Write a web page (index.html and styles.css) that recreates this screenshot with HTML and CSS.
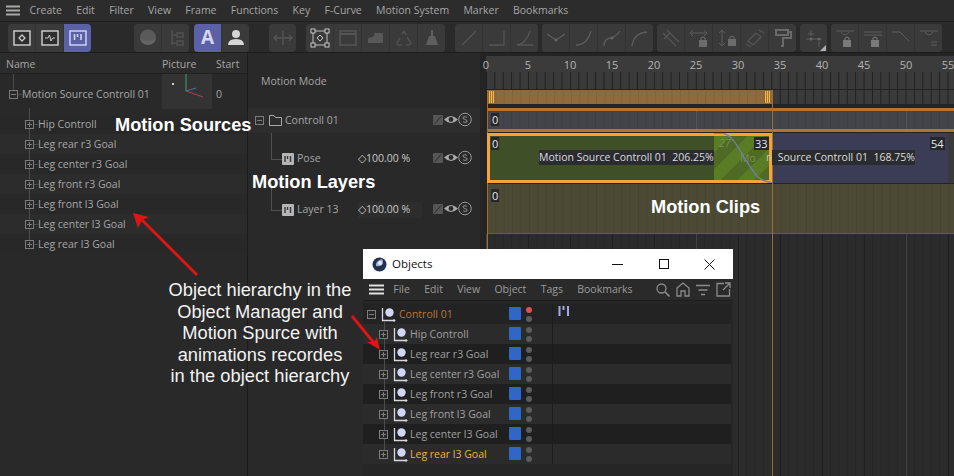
FILE: index.html
```html
<!DOCTYPE html>
<html lang="en">
<head>
<meta charset="utf-8">
<title>Motion System</title>
<link rel="stylesheet" href="styles.css">
</head>
<body>
<svg class="defs" width="0" height="0">
  <symbol id="minus" viewBox="0 0 9 9"><rect x=".5" y=".5" width="8" height="8" fill="none" stroke="currentColor"/><path d="M2 4.5H7" stroke="currentColor"/></symbol>
  <symbol id="plus" viewBox="0 0 9 9"><rect x=".5" y=".5" width="8" height="8" fill="none" stroke="currentColor"/><path d="M2 4.5H7M4.5 2V7" stroke="currentColor"/></symbol>
  <symbol id="clip" viewBox="0 0 12 12"><rect width="12" height="12" rx="1" fill="#b5b5b5"/><path d="M3 3V9M5.5 3V6M8.5 3V9" stroke="#3a3a3a" stroke-width="1.4"/></symbol>
  <symbol id="null" viewBox="0 0 15 15"><path d="M1.5 1V13.5H14" fill="none" stroke="#d8d8e0" stroke-width="1.3"/><path d="M12.500 12l1.500 1.500-1.500 1.500" fill="none" stroke="#d8d8e0"/><circle cx="8.500" cy="5.500" r="4.200" fill="#d2d6f6"/></symbol>
  <symbol id="states" viewBox="0 0 40 15"><rect x="1" y="3" width="10" height="10" rx="1" fill="#555"/><path d="M3 11.500l6-7" stroke="#2a2a2a"/><path d="M12 7.500q7-7 14 0q-7 7-14 0z" fill="#aaa"/><circle cx="19" cy="7.500" r="2.400" fill="#2a2a2a"/><circle cx="33" cy="7.500" r="6.300" fill="none" stroke="#999"/><path d="M35 5.300q-2-1.300-4 0q-.8 1.500 2 2.200q3 .8 2 2.300q-2 1.300-4 0" fill="none" stroke="#999" stroke-width=".9"/></symbol>
</svg>

<nav class="menubar">
  <svg class="burger" width="14" height="11" viewBox="0 0 14 11"><path d="M0 1.500H14M0 5.500H14M0 9.500H14" stroke="#a8a8a8" stroke-width="1.800"/></svg>
  <span>Create</span><span>Edit</span><span>Filter</span><span>View</span><span>Frame</span><span>Functions</span><span>Key</span><span>F-Curve</span><span>Motion System</span><span>Marker</span><span>Bookmarks</span>
</nav>

<div class="toolbar">
  <div class="grip"></div>
  <div class="group">
    <button><svg viewBox="0 0 20 20"><rect x="2" y="3" width="16" height="14" fill="#2e2e2e" stroke="#c8c8c8" stroke-width="1.500"/><path d="M10 7l3 3-3 3-3-3z" fill="none" stroke="#c8c8c8" stroke-width="1.300"/></svg></button>
    <button><svg viewBox="0 0 20 20"><rect x="2" y="3" width="16" height="14" fill="#2e2e2e" stroke="#c8c8c8" stroke-width="1.500"/><path d="M5 10H8L9.500 7L11 13L12.500 10H15" fill="none" stroke="#c8c8c8"/></svg></button>
    <button class="on"><svg viewBox="0 0 20 20"><rect x="2" y="3" width="16" height="14" fill="none" stroke="#cfd2ee" stroke-width="1.500"/><path d="M6.500 6V12M9.500 6V9M13 6V12" stroke="#cfd2ee" stroke-width="1.600"/></svg></button>
  </div>
  <div class="group g-far">
    <button><svg viewBox="0 0 20 20"><ellipse cx="10" cy="9" rx="8" ry="7.500" fill="#5a5a5a"/><path d="M2 10q8 6 16 0q-1 7-8 7t-8-7z" fill="#646464"/></svg></button>
    <button><svg viewBox="0 0 20 20"><path d="M6 2V17M6 7H11M6 15H11M11 5H17V9H11ZM11 13H17V17H11Z" fill="none" stroke="#525252" stroke-width="1.500"/></svg></button>
  </div>
  <div class="group g-5">
    <button class="on"><span class="glyph">A</span></button>
    <button><svg viewBox="0 0 20 20"><circle cx="10" cy="6" r="4" fill="#d6d6d6"/><path d="M2 17q0-6 8-6t8 6z" fill="#d6d6d6"/></svg></button>
  </div>
  <div class="group g-20">
    <button><svg viewBox="0 0 20 20"><path d="M1 10H19M4 7l-3 3 3 3M16 7l3 3-3 3M10 3V17" fill="none" stroke="#555" stroke-width="1.300"/></svg></button>
  </div>
  <div class="group g-10">
    <button><svg viewBox="0 0 20 20"><rect x="3" y="3" width="14" height="14" fill="none" stroke="#bdbdbd"/><rect x="1" y="1" width="4" height="4" fill="#333" stroke="#c8c8c8"/><rect x="15" y="1" width="4" height="4" fill="#333" stroke="#c8c8c8"/><rect x="1" y="15" width="4" height="4" fill="#333" stroke="#c8c8c8"/><rect x="15" y="15" width="4" height="4" fill="#333" stroke="#c8c8c8"/><path d="M10 7l3 3-3 3-3-3z" fill="none" stroke="#c8c8c8"/></svg></button>
    <button><svg viewBox="0 0 20 20"><rect x="2" y="3" width="16" height="14" fill="none" stroke="#555" stroke-width="1.500"/><path d="M2 6H18" stroke="#555" stroke-width="2"/></svg></button>
    <button><svg viewBox="0 0 20 20"><path d="M2 15V11Q3 9 7 9L9 5H17V15Z" fill="#585858"/></svg></button>
    <button><svg viewBox="0 0 20 20"><path d="M10 3L12.500 7M13 9L17 15L15 17H12M8 17H4L3 15L6 10M8 6L10 3" fill="none" stroke="#505050" stroke-width="1.500"/></svg></button>
    <button><svg viewBox="0 0 20 20"><path d="M9 2H11V8H13L16 17H4L7 8H9Z" fill="#5e5e5e"/></svg></button>
  </div>
  <div class="group g-10">
    <button><svg viewBox="0 0 20 20"><path d="M3 17L17 3" stroke="#555" stroke-width="1.300"/></svg></button>
    <button><svg viewBox="0 0 20 20"><path d="M2 17H17V3" fill="none" stroke="#555" stroke-width="1.300"/></svg></button>
    <button><svg viewBox="0 0 20 20"><path d="M2 17Q11 16 15 3M2 17H18" fill="none" stroke="#555" stroke-width="1.300"/></svg></button>
  </div>
  <div class="group">
    <button><svg viewBox="0 0 20 20"><path d="M1 6L10 12L19 6" fill="none" stroke="#5c5c5c" stroke-width="1.300"/><circle cx="10" cy="12" r="1.500" fill="#666"/></svg></button>
    <button><svg viewBox="0 0 20 20"><path d="M2 17Q13 17 17 3" fill="none" stroke="#5c5c5c" stroke-width="1.300"/></svg></button>
    <button><svg viewBox="0 0 20 20"><path d="M2 18Q2 11 8 10T18 3" fill="none" stroke="#5c5c5c" stroke-width="1.300"/><circle cx="10" cy="10" r="1.500" fill="#666"/></svg></button>
    <button><svg viewBox="0 0 20 20"><path d="M2 18Q4 5 17 4" fill="none" stroke="#5c5c5c" stroke-width="1.300"/></svg></button>
  </div>
  <div class="group">
    <button><svg viewBox="0 0 20 20"><path d="M2 5L15 18M6 2L18 14M3 11L9 5" fill="none" stroke="#555" stroke-width="1.300"/></svg></button>
    <button><svg viewBox="0 0 20 20"><path d="M1 5H18M1 5l3-3M1 5l3 3M18 5l-3-3M18 5l-3 3" fill="none" stroke="#5c5c5c"/><rect x="10" y="12" width="8" height="7" fill="#6c6c6c"/><path d="M12 12V10Q14 8 16 10V12" fill="none" stroke="#6c6c6c"/></svg></button>
    <button><svg viewBox="0 0 20 20"><path d="M5 2V18M5 2l-3 3M5 2l3 3M5 18l-3-3M5 18l3-3" fill="none" stroke="#5c5c5c"/><rect x="11" y="11" width="8" height="7" fill="#6c6c6c"/><path d="M13 11V9Q15 7 17 9V11" fill="none" stroke="#6c6c6c"/></svg></button>
    <button><svg viewBox="0 0 20 20"><path d="M3 13L11 5L16 9L8 17ZM1 16L6 19M14 2L19 5" fill="none" stroke="#555" stroke-width="1.300"/></svg></button>
    <button><svg viewBox="0 0 20 20"><path d="M3 2H15V7H3ZM15 4H18V10H10V18H8" fill="none" stroke="#6a6a6a" stroke-width="2"/></svg></button>
  </div>
  <div class="group corner">
    <button><svg viewBox="0 0 20 20"><path d="M2 11H18M7 2V8M4 6H10" stroke="#5c5c5c"/><circle cx="7" cy="11" r="1.500" fill="#666"/><circle cx="15" cy="11" r="1.500" fill="#666"/><path d="M15 14V19" stroke="#5c5c5c"/></svg></button>
  </div>
  <div class="group">
    <button><svg viewBox="0 0 20 20"><path d="M1 3H19M6 4Q10 10 14 4" fill="none" stroke="#5c5c5c"/><rect x="8" y="12" width="8" height="7" fill="#7a7a7a"/><path d="M10 12V10Q12 8 14 10V12" fill="none" stroke="#7a7a7a"/></svg></button>
    <button><svg viewBox="0 0 20 20"><path d="M1 4H19M1 7H19" fill="none" stroke="#5c5c5c"/><rect x="8" y="12" width="8" height="7" fill="#7a7a7a"/><path d="M10 12V10Q12 8 14 10V12" fill="none" stroke="#7a7a7a"/></svg></button>
    <button><svg viewBox="0 0 20 20"><path d="M1 4H9L18 13" fill="none" stroke="#5c5c5c"/></svg></button>
    <button><svg viewBox="0 0 20 20"><path d="M1 3H19M6 4Q10 10 14 4M12 14H18M12 17H18" fill="none" stroke="#5c5c5c"/></svg></button>
  </div>
</div>

<main class="workspace">
  <section class="sources">
    <header class="src-head"><span class="h-name">Name</span><span class="h-pic">Picture</span><span>Start</span></header>
    <div class="src-root">
      <svg class="ex"><use href="#minus"/></svg>
      <span class="root-name">Motion Source Controll 01</span>
      <div class="thumb"><svg width="50" height="35" viewBox="0 0 50 35"><rect x="10" y="9" width="2" height="2" fill="#ccc"/><path d="M24 0V17" stroke="#3fa070"/><path d="M24 17L34 14" stroke="#4a6fb0"/><path d="M24 17L41 23" stroke="#b04050"/></svg></div>
      <span class="root-start">0</span>
    </div>
    <ul class="src-list">
      <li><svg class="ex"><use href="#plus"/></svg>Hip Controll</li>
      <li><svg class="ex"><use href="#plus"/></svg>Leg rear r3 Goal</li>
      <li><svg class="ex"><use href="#plus"/></svg>Leg center r3 Goal</li>
      <li><svg class="ex"><use href="#plus"/></svg>Leg front r3 Goal</li>
      <li><svg class="ex"><use href="#plus"/></svg>Leg front l3 Goal</li>
      <li><svg class="ex"><use href="#plus"/></svg>Leg center l3 Goal</li>
      <li><svg class="ex"><use href="#plus"/></svg>Leg rear l3 Goal</li>
    </ul>
  </section>

  <section class="layers">
    <div class="mode">Motion Mode</div>
    <div class="layer-group"><svg class="ex"><use href="#minus"/></svg><svg class="folder" width="13" height="11" viewBox="0 0 13 11"><path d="M.500 10.500V.500H5L6.500 2.500H12.500V10.500Z" fill="none" stroke="#a8a8a8"/></svg><span class="layer-label">Controll 01</span><svg class="states" width="40" height="15"><use href="#states"/></svg></div>
    <div class="layer"><svg class="clip-ic" width="12" height="12"><use href="#clip"/></svg><span class="layer-name">Pose</span><span class="value">◇100.00 %</span><svg class="states" width="40" height="15"><use href="#states"/></svg></div>
    <div class="layer"><svg class="clip-ic" width="12" height="12"><use href="#clip"/></svg><span class="layer-name">Layer 13</span><span class="value boxed">◇100.00 %</span><svg class="states" width="40" height="15"><use href="#states"/></svg></div>
  </section>

  <section class="timeline">
    <div class="ruler"><span>0</span><span>5</span><span>10</span><span>15</span><span>20</span><span>25</span><span>30</span><span>35</span><span>40</span><span>45</span><span>50</span><span>55</span></div>
    <div class="keys"></div>
    <div class="range"><div class="range-bar"><i class="handle"></i><i class="handle"></i></div></div>
    <div class="group-track"><b class="num">0</b></div>
    <div class="clip-track">
      <div class="clip-green">
        <div class="blend"><span class="ghost g27">27</span><span class="ghost gmo">Mo</span>
          <svg width="58" height="50" viewBox="0 0 58 50"><path d="M0 0H8C22 2 28 26 44 44Q48 48 58 50" fill="none" stroke="#6f7fa8" stroke-width="1.400"/></svg>
        </div>
        <b class="num">0</b><b class="num num-33">33</b>
        <span class="clip-text">Motion Source Controll 01&nbsp; 206.25%</span>
      </div>
      <div class="clip-blue"><b class="num num-end">54</b><span class="blue-text"><span class="cut">n</span><span class="clip-text inline"> Source Controll 01&nbsp; 168.75%</span></span></div>
    </div>
    <div class="motion-track"><b class="num">0</b></div>
    <div class="lower"></div>
    <i class="mark mark-a"></i><i class="mark mark-b"></i>
  </section>
</main>

<div class="note n-sources">Motion Sources</div>
<div class="note n-layers">Motion Layers</div>
<div class="note n-clips">Motion Clips</div>
<div class="caption">Object hierarchy in the<br>Object Manager and<br>Motion Spurce with<br>animations recordes<br>in the object hierarchy</div>

<div class="window">
  <div class="titlebar">
    <svg class="c4d" width="15" height="15" viewBox="0 0 15 15"><circle cx="7.500" cy="7.500" r="7" fill="#23304f"/><path d="M4 9Q3 4 10 2Q12 5 10 8Q7 10 4 9Z" fill="#9fb2d6"/><circle cx="8" cy="6" r="2" fill="#e8eef8"/></svg>
    <span class="win-title">Objects</span>
    <div class="win-btns">
      <svg width="11" height="11" viewBox="0 0 11 11"><path d="M0 5.500H11" stroke="#111"/></svg>
      <svg width="10" height="10" viewBox="0 0 10 10"><rect x=".5" y=".5" width="9" height="9" fill="none" stroke="#111"/></svg>
      <svg width="11" height="11" viewBox="0 0 11 11"><path d="M.500 .500L10.500 10.500M10.500 .500L.500 10.500" stroke="#111"/></svg>
    </div>
  </div>
  <div class="win-menu">
    <svg class="burger" width="15" height="11" viewBox="0 0 15 11"><path d="M0 1.500H15M0 5.500H15M0 9.500H15" stroke="#e0e0e0" stroke-width="1.800"/></svg>
    <span>File</span><span>Edit</span><span>View</span><span>Object</span><span>Tags</span><span>Bookmarks</span>
    <div class="win-tools">
      <svg width="14" height="14" viewBox="0 0 14 14"><circle cx="5.500" cy="5.500" r="4.500" fill="none" stroke="#8c8c8c" stroke-width="1.300"/><path d="M9 9L13.500 13.500" stroke="#8c8c8c" stroke-width="1.600"/></svg>
      <svg width="14" height="15" viewBox="0 0 14 15"><path d="M1 14V6L7 1L13 6V14H9V9H5V14Z" fill="none" stroke="#8c8c8c" stroke-width="1.300"/></svg>
      <svg width="14" height="12" viewBox="0 0 14 12"><path d="M0 1.500H14M2.500 6H11.500M5 10.500H9" stroke="#8c8c8c" stroke-width="1.600"/></svg>
      <svg width="15" height="15" viewBox="0 0 15 15"><path d="M8 1.500H1V14H13.500V7M7 8L14 1M9 1H14V6" fill="none" stroke="#8c8c8c" stroke-width="1.300"/></svg>
    </div>
  </div>
  <div class="obj-tree">
    <div class="obj top"><div class="obj-left"><svg class="ex"><use href="#minus"/></svg><svg class="nl" width="15" height="15"><use href="#null"/></svg><span class="obj-name orange">Controll 01</span><i class="swatch"></i><i class="dots red"></i></div><div class="obj-right"><svg width="12" height="12" viewBox="0 0 12 12"><path d="M1.500 1V11M5.500 1V5M10 1V11" stroke="#a6a6e8" stroke-width="2"/></svg></div></div>
    <div class="obj"><div class="obj-left"><svg class="ex"><use href="#plus"/></svg><svg class="nl" width="15" height="15"><use href="#null"/></svg><span class="obj-name">Hip Controll</span><i class="swatch"></i><i class="dots"></i></div><div class="obj-right"></div></div>
    <div class="obj"><div class="obj-left"><svg class="ex"><use href="#plus"/></svg><svg class="nl" width="15" height="15"><use href="#null"/></svg><span class="obj-name">Leg rear r3 Goal</span><i class="swatch"></i><i class="dots"></i></div><div class="obj-right"></div></div>
    <div class="obj"><div class="obj-left"><svg class="ex"><use href="#plus"/></svg><svg class="nl" width="15" height="15"><use href="#null"/></svg><span class="obj-name">Leg center r3 Goal</span><i class="swatch"></i><i class="dots"></i></div><div class="obj-right"></div></div>
    <div class="obj"><div class="obj-left"><svg class="ex"><use href="#plus"/></svg><svg class="nl" width="15" height="15"><use href="#null"/></svg><span class="obj-name">Leg front r3 Goal</span><i class="swatch"></i><i class="dots"></i></div><div class="obj-right"></div></div>
    <div class="obj"><div class="obj-left"><svg class="ex"><use href="#plus"/></svg><svg class="nl" width="15" height="15"><use href="#null"/></svg><span class="obj-name">Leg front l3 Goal</span><i class="swatch"></i><i class="dots"></i></div><div class="obj-right"></div></div>
    <div class="obj"><div class="obj-left"><svg class="ex"><use href="#plus"/></svg><svg class="nl" width="15" height="15"><use href="#null"/></svg><span class="obj-name">Leg center l3 Goal</span><i class="swatch"></i><i class="dots"></i></div><div class="obj-right"></div></div>
    <div class="obj"><div class="obj-left"><svg class="ex"><use href="#plus"/></svg><svg class="nl" width="15" height="15"><use href="#null"/></svg><span class="obj-name gold">Leg rear l3 Goal</span><i class="swatch"></i><i class="dots"></i></div><div class="obj-right"></div></div>
  </div>
</div>

<svg class="arrows" width="954" height="476" viewBox="0 0 954 476">
  <path d="M197 275L141 219" stroke="#e01414" stroke-width="2.800"/>
  <path d="M133 213L149 217L142 220L138 228Z" fill="#e01414"/>
  <path d="M352 316L374 343" stroke="#e01414" stroke-width="2.800"/>
  <path d="M380 350L367 342L374 342L377 337Z" fill="#e01414"/>
</svg>
</body>
</html>
```
FILE: styles.css
```css
* { box-sizing: border-box; }
html, body { margin: 0; padding: 0; }
body {
  width: 954px; height: 476px; overflow: hidden; position: relative;
  background: #292929; color: #a6a6a6;
  font: 10.5px/1 "Open Sans", "Noto Sans", sans-serif;
}
.defs { position: absolute; }
svg { display: block; flex: none; }

.menubar { height: 22px; display: flex; align-items: center; gap: 14.3px; padding: 0 0 0 6px; background: #2c2c2c; border-bottom: 1px solid #1e1e1e; }
.menubar .burger { margin-right: -4.700px; }

.toolbar { height: 31px; display: flex; align-items: center; gap: 4px; padding: 1px 0 0 8px; background: #2a2a2a; border-bottom: 1px solid #1c1c1c; position: relative; }
.grip { position: absolute; left: 1px; top: 6px; width: 4px; height: 20px; background: radial-gradient(#4a4a4a 40%, transparent 45%) 0 0 / 2px 2px; }
.group { display: flex; height: 28px; border-radius: 4px; background: #3a3a3a; gap: 1px; overflow: hidden; position: relative; }
.g-far { margin-left: 39px; }
.g-5 { margin-left: 1px; }
.g-20 { margin-left: 16px; }
.g-10 { margin-left: 6px; }
.group button { width: 27px; height: 28px; padding: 0; border: 0; background: #3a3a3a; display: flex; align-items: center; justify-content: center; box-shadow: 1px 0 0 #333; }
.group button:last-child { box-shadow: none; }
.group button svg { width: 20px; height: 20px; }
.group button.on { background: #5a61a6; }
.glyph { font: 700 19px/1 "Open Sans", sans-serif; color: #d4d6ee; }
.corner::after { content: ""; position: absolute; right: 1px; bottom: 1px; border: 3px solid transparent; border-right-color: #b0b0b0; border-bottom-color: #b0b0b0; }

.workspace { display: flex; height: 423px; }
.sources { flex: none; width: 248px; border-right: 1px solid #1c1c1c; }
.src-head { height: 21px; display: flex; align-items: center; padding: 3px 0 0 6px; background: #2c2c2c; border-bottom: 1px solid #1f1f1f; }
.h-name { width: 156px; }
.h-pic { width: 54px; }
.src-root { height: 39px; display: flex; align-items: center; padding: 2px 0 0 9px; position: relative; }
.ex { width: 9px; height: 9px; color: #7c7c7c; }
.src-root::before { content: ""; position: absolute; left: 13px; top: 0; height: 16px; border-left: 1px solid #4c4c4c; }
.src-root::after { content: ""; position: absolute; left: 18px; top: 20px; width: 4px; border-top: 1px solid #4c4c4c; }
.root-name { margin-left: 4px; width: 140px; white-space: nowrap; }
.thumb { width: 50px; height: 35px; align-self: flex-start; margin-top: -2px; background: #333; }
.root-start { margin-left: 4px; }
.src-list { list-style: none; margin: 0; padding: 1px 0 0; position: relative; }
.src-list::before { content: ""; position: absolute; left: 29px; top: -5px; bottom: 10px; border-left: 1px solid #4c4c4c; z-index: 1; }
.src-list li { height: 20px; display: flex; align-items: center; padding-left: 25px; gap: 4px; position: relative; background: #282828; }
.src-list li:nth-child(even) { background: #2c2c2c; }
.src-list li::after { content: ""; position: absolute; left: 34px; top: 10px; width: 4px; border-top: 1px solid #4c4c4c; }
.src-list li .ex { background: #2a2a2a; position: relative; z-index: 2; }

.layers { flex: none; width: 232px; position: relative; }
.mode { height: 55px; display: flex; align-items: center; padding: 1px 0 0 13px; }
.layer-group { height: 25px; display: flex; align-items: center; padding-left: 7px; background: #2d2d2d; }
.folder { margin-left: 5px; }
.layer-label { margin-left: 3px; flex: 1; }
.states { margin-right: 8px; margin-top: -3px; }
.layer { height: 51px; display: flex; align-items: center; padding-left: 34px; position: relative; }
.layer::before { content: ""; position: absolute; left: 23px; top: 0; height: 26px; width: 10px; border-left: 1px solid #505050; border-bottom: 1px solid #505050; }
.layer-name { margin-left: 3px; width: 61px; }
.value { color: #c8c8c8; width: 64px; height: 16px; display: flex; align-items: center; }
.value.boxed { background: #2d2d2d; }
.layer .states { margin-left: auto; }

.timeline { flex: 1; min-width: 0; overflow: hidden; position: relative; display: flex; flex-direction: column; background: #242424; }
.ruler { flex: none; height: 16px; margin: 3px 0 0 6px; background: #3b3b3b; display: flex; color: #b4b4b4; font-size: 11px; align-items: center; }
.ruler span { flex: none; width: 42px; text-align: center; position: relative; left: -21px; }
.keys, .range { flex: none; margin-left: 6px; background-color: #3a3a3a; background-image: linear-gradient(90deg, #1f1f1f 1px, transparent 1px); background-size: 8.4px 100%; }
.keys { height: 18px; border-bottom: 1px solid #222; }
.range { height: 14px; }
.range-bar { width: 285px; height: 14px; margin-left: 1px; background-color: #8e6a3c; display: flex; justify-content: space-between; padding: 1px 2px; background-image: linear-gradient(90deg, #84623a 1px, transparent 1px); background-size: 8.4px 100%; }
.handle { width: 5px; background: repeating-linear-gradient(90deg, #f6b840 0 1px, #a07a3c 1px 2px); }
.group-track { flex: none; height: 24px; margin: 4px 0 0 7px; border-top: 3px solid #b4742e; border-bottom: 3px solid #b4742e; background-color: #43454a; position: relative; background-image: linear-gradient(90deg, #55565a 1px, transparent 1px 210px), linear-gradient(90deg, #3c3e42 1px, transparent 1px); background-size: 210px 100%, 8.4px 100%; background-position: -1px 0, -1px 0; }
.num { position: absolute; left: 4px; top: 2px; background: #25272a; color: #e8e8e8; font: 400 11px/13px "Open Sans", sans-serif; padding: 0 1px; }
.clip-track { flex: none; height: 50px; margin: 1px 0 0 7px; display: flex; position: relative; background: #3a3a3a; }
.clip-green { width: 285px; height: 50px; background: #3f5029; border: 3px solid #f2a33a; position: relative; z-index: 1; }
.clip-green .num { left: 1px; top: 1px; }
.clip-green .num-33 { left: 264px; }
.clip-blue { width: 176px; background: #3a3d55; position: relative; }
.clip-blue .num-end { left: 158px; top: 4px; }
.clip-text { position: absolute; left: 49px; top: 14px; width: 175px; background: #2a2c30; color: #dcdcdc; line-height: 15px; white-space: nowrap; }
.blue-text { position: absolute; left: -6px; top: 17px; display: flex; z-index: 2; line-height: 15px; white-space: nowrap; }
.cut { color: #c4c8b8; width: 6px; }
.clip-text.inline { position: static; width: auto; white-space: pre; padding-left: 3px; }
.blend { position: absolute; left: 224px; top: 0; width: 55px; height: 44px; background: repeating-linear-gradient(135deg, #597c25 0 12px, #4e6a25 12px 24px); }
.blend svg { position: absolute; left: 0; top: -3px; z-index: 2; }
.ghost { position: absolute; color: #74934a; }
.g27 { left: 5px; top: 2px; font-style: italic; }
.gmo { left: 26px; top: 17px; }
.motion-track { flex: none; height: 50px; margin: 1px 0 0 7px; background-color: #4c4a35; border-bottom: 1px solid #66652f; position: relative; background-image: linear-gradient(90deg, #454430 1px, transparent 1px); background-size: 8.4px 100%; }
.motion-track .num { top: 5px; }
.lower { flex: 1; margin-left: 6px; background-color: #2b2b2b; background-image: linear-gradient(90deg, #434343 1px, transparent 1px), linear-gradient(90deg, #202020 1px, transparent 1px), linear-gradient(90deg, #262626 1px, transparent 1px); background-size: 210px 100%, 42px 100%, 8.4px 100%; }
.mark { position: absolute; top: 37px; bottom: 0; border-left: 1px solid #a46c2e; }
.mark-a { left: 7px; }
.mark-b { left: 292px; }

.note { position: absolute; color: #fff; font: 700 18.200px/20px "Liberation Sans", Arial, sans-serif; white-space: nowrap; }
.n-sources { left: 115px; top: 115px; }
.n-layers { left: 252px; top: 172px; }
.n-clips { left: 651px; top: 197px; }
.caption { position: absolute; left: 150px; top: 279px; width: 220px; text-align: center; color: #f2f2f2; font: 400 18.300px/21.600px "Liberation Sans", Arial, sans-serif; }

.window { position: absolute; left: 363px; top: 249px; width: 370px; height: 227px; background: #262626; z-index: 2; }
.titlebar { height: 30px; background: #fff; display: flex; align-items: center; padding-left: 9px; color: #111; font: 400 11.500px/1 "Open Sans", sans-serif; }
.win-title { margin-left: 5px; }
.win-btns { margin-left: auto; display: flex; align-items: center; gap: 35.500px; margin-right: 18px; }
.win-menu { height: 22px; display: flex; align-items: center; gap: 14.300px; padding-left: 6px; color: #9c9c9c; background: #2a2a2a; border-bottom: 1px solid #1d1d1d; }
.win-menu .burger { margin-right: -5px; }
.win-tools { display: flex; align-items: center; gap: 6px; margin-left: auto; margin-right: 2px; }
.obj-tree { padding: 3px 2px 0 0; position: relative; }
.obj-tree::before { content: ""; position: absolute; left: 21px; top: 20px; height: 135px; border-left: 1px solid #4c4c4c; z-index: 1; }
.obj { height: 20px; display: flex; }
.obj:nth-child(even) { background: #2b2b2b; }
.obj:nth-child(odd) { background: #1f1f1f; }
.obj.top { background: #232323; }
.obj-left { width: 190px; display: flex; align-items: center; padding-left: 16px; border-right: 1px solid #1c1c1c; position: relative; }
.obj-left .ex { position: relative; z-index: 2; background: #262626; }
.obj.top .obj-left { padding-left: 4px; }
.obj-left .nl { margin-left: 5px; }
.obj-name { margin-left: 2px; color: #a0a0a0; white-space: nowrap; }
.obj.top .obj-name { margin-left: 3px; }
.obj .orange { color: #b4773a; }
.obj .gold { color: #e8b53e; }
.swatch { position: absolute; left: 146px; top: 3px; width: 12px; height: 13px; border-radius: 1px; background: #2f66c8; }
.dots { position: absolute; left: 163px; top: 3px; width: 6px; height: 6px; border-radius: 50%; background: #5c5c5c; box-shadow: 0 9px 0 #5c5c5c; }
.dots.red { background: #e05050; }
.obj-right { padding: 1px 0 0 5px; flex: 1; }

.arrows { position: absolute; left: 0; top: 0; z-index: 3; pointer-events: none; }
```
